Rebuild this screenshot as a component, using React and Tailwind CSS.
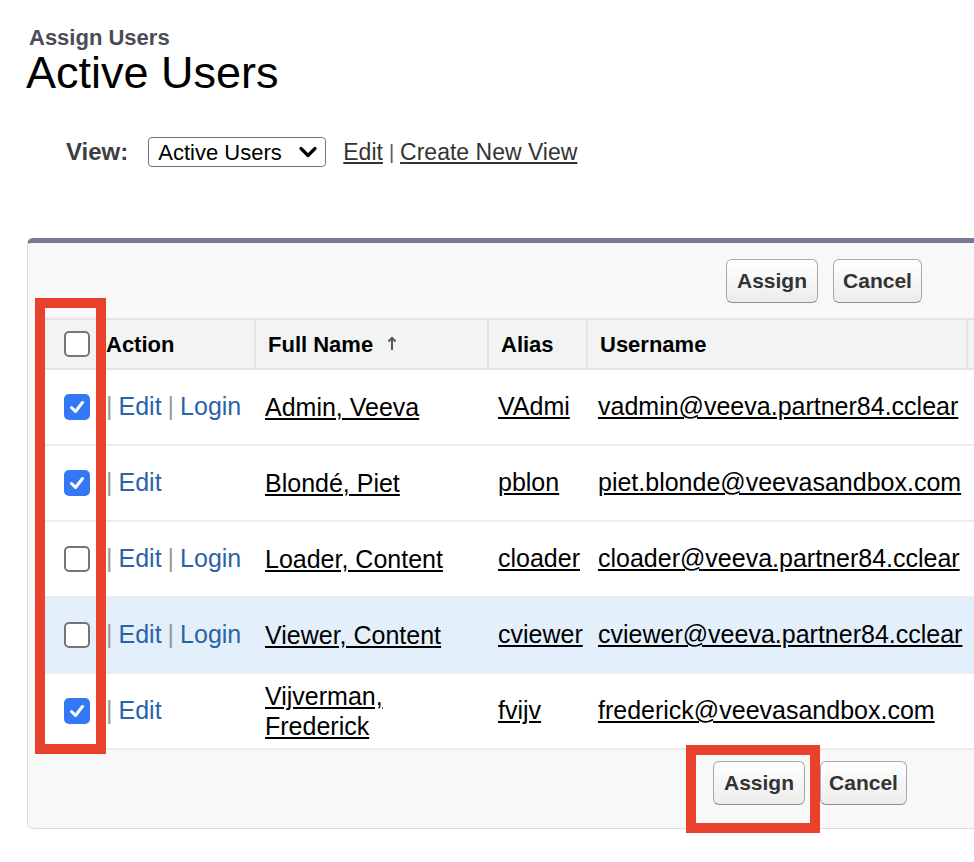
import React from "react";

const users = [
  { checked: true, login: true, name: "Admin, Veeva", alias: "VAdmi", username: "vadmin@veeva.partner84.cclear" },
  { checked: true, login: false, name: "Blondé, Piet", alias: "pblon", username: "piet.blonde@veevasandbox.com" },
  { checked: false, login: true, name: "Loader, Content", alias: "cloader", username: "cloader@veeva.partner84.cclear" },
  { checked: false, login: true, name: "Viewer, Content", alias: "cviewer", username: "cviewer@veeva.partner84.cclear", hover: true },
  { checked: true, login: false, name: "Vijverman,\nFrederick", alias: "fvijv", username: "frederick@veevasandbox.com" },
];

const font = { fontFamily: '"Liberation Sans", Arial, sans-serif' };

const Checkbox = ({ checked }) =>
  checked ? (
    <span className="flex h-[26px] w-[26px] items-center justify-center rounded-[5px] bg-[#3478f6]">
      <svg width="18" height="18" viewBox="0 0 18 18">
        <path d="M3.5 9.5 L7.5 13.5 L14.5 4.5" fill="none" stroke="white" strokeWidth="3" strokeLinecap="round" strokeLinejoin="round" />
      </svg>
    </span>
  ) : (
    <span className="block h-[26px] w-[26px] rounded-[5px] border-2 border-[#767676] bg-white" />
  );

const Button = ({ children, className = "" }) => (
  <button className={`h-[44px] rounded-[6px] border border-[#a9a9a9] border-b-[#8f8f8f] bg-gradient-to-b from-white to-[#ececec] text-[21px] font-bold text-[#333] ${className}`}>
    {children}
  </button>
);

export default function App() {
  return (
    <div className="relative h-[862px] w-[974px] overflow-hidden bg-white text-black" style={font}>
      {/* heading */}
      <div className="pl-[29px] pt-[26px] text-[22px] font-bold leading-[24px] text-[#4a4b57]">Assign Users</div>
      <h1 className="pl-[26px] text-[45px] leading-[46px] text-black">Active Users</h1>

      {/* view selector */}
      <div className="mt-[38px] flex items-center pl-[66px]">
        <span className="text-[24px] font-bold text-[#3e3e3e]">View:</span>
        <div className="ml-[20px] flex h-[30px] w-[178px] items-center justify-between rounded-[4px] border border-[#767676] pl-[9px] pr-[7px] text-[22px]">
          <span>Active Users</span>
          <svg width="20" height="14" viewBox="0 0 20 14">
            <path d="M3 3.5 L10 10.5 L17 3.5" fill="none" stroke="black" strokeWidth="3.2" strokeLinecap="round" strokeLinejoin="round" />
          </svg>
        </div>
        <a className="ml-[17px] text-[23px] text-[#333] underline">Edit</a>
        <span className="mx-[6px] text-[20px] text-[#555]">|</span>
        <a className="text-[23px] text-[#333] underline">Create New View</a>
      </div>

      {/* list panel */}
      <div className="ml-[27px] mt-[68px] w-[1000px] rounded-t-[6px] rounded-b-[6px] border border-t-[5px] border-[#dddddd] border-t-[#747b92] bg-[#f8f8f8]">
        <div className="flex h-[75px] items-start gap-[15px] pl-[698px] pt-[16px]">
          <Button className="w-[92px]">Assign</Button>
          <Button className="w-[89px]">Cancel</Button>
        </div>

        <div className="ml-[8px] bg-white">
          <div className="grid h-[52px] grid-cols-[218px_233px_99px_380px_1fr] border-t-2 border-b-2 border-[#e4e4e4] bg-[#f2f3f3] text-[22px] font-bold">
            <div className="flex items-center">
              <span className="ml-[28px]"><Checkbox checked={false} /></span>
              <span className="ml-[16px]">Action</span>
            </div>
            <div className="flex items-center border-l-2 border-[#e4e4e4] pl-[12px]">
              Full Name
              <svg className="ml-[14px]" width="10" height="16" viewBox="0 0 10 16">
                <path d="M5 2 L5 14 M1.5 5.5 L5 2 L8.5 5.5" fill="none" stroke="#555" strokeWidth="2" />
              </svg>
            </div>
            <div className="flex items-center border-l-2 border-[#e4e4e4] pl-[12px]">Alias</div>
            <div className="flex items-center border-l-2 border-[#e4e4e4] pl-[12px]">Username</div>
            <div className="border-l-2 border-[#e4e4e4]"></div>
          </div>

          {users.map((u, i) => (
            <div
              key={i}
              className={`grid h-[76px] grid-cols-[218px_233px_99px_380px_1fr] border-b-2 border-[#ececec] text-[25px] ${u.hover ? "bg-[#e3f0fc]" : "bg-white"}`}
            >
              <div className="flex items-center">
                <span className="ml-[28px]"><Checkbox checked={u.checked} /></span>
                <span className="ml-[16px] text-[#9a9a9a]">|</span>
                <a className="ml-[6px] text-[#2b63a9]">Edit</a>
                {u.login && (
                  <>
                    <span className="ml-[6px] text-[#9a9a9a]">|</span>
                    <a className="ml-[6px] text-[#2b63a9]">Login</a>
                  </>
                )}
              </div>
              <div className="flex items-center pl-[11px] leading-[30px]">
                <a className="whitespace-pre-line underline">{u.name}</a>
              </div>
              <div className="flex items-center pl-[11px]">
                <a className="underline">{u.alias}</a>
              </div>
              <div className="flex items-center pl-[12px]">
                <a className="underline">{u.username}</a>
              </div>
              <div></div>
            </div>
          ))}
        </div>

        <div className="flex h-[78px] items-start gap-[15px] pl-[685px] pt-[11px]">
          <Button className="w-[92px]">Assign</Button>
          <Button className="w-[87px]">Cancel</Button>
        </div>
      </div>

      {/* annotation boxes */}
      <div className="absolute left-[35px] top-[298px] h-[456px] w-[71px] border-[10px] border-[#e8412c]" />
      <div className="absolute left-[686px] top-[745px] h-[88px] w-[134px] border-[10px] border-[#e8412c]" />
    </div>
  );
}
